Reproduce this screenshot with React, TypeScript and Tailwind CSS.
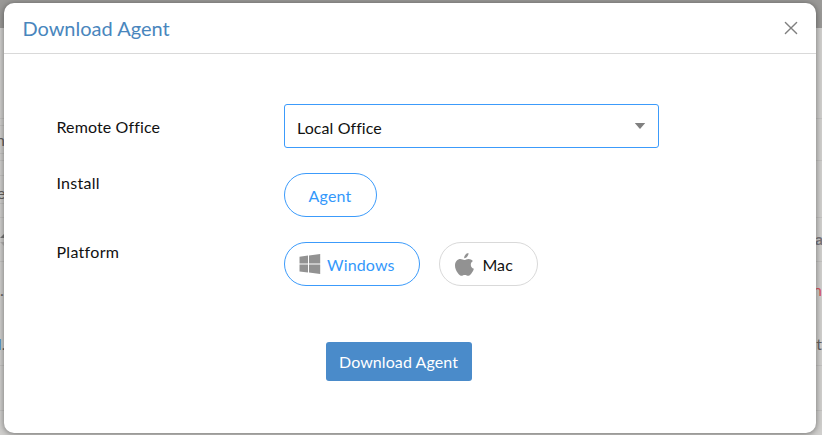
import type { ReactNode } from 'react';

function Backdrop() {
  return (
    <div className="flex h-[435px] w-full flex-col bg-[#d0cfcd] text-[16px] leading-[20px] text-[#65625f]">
      <div className="h-7 shrink-0 bg-[#9a9997]" />
      <div className="h-[91px] shrink-0 border-b border-[#c3c2c0]" />
      <div className="flex h-[42px] shrink-0 items-center border-b border-[#c3c2c0]">
        <div className="flex h-[29px] w-2 items-center border-y border-[#c3c2c0]">
          <span className="-ml-1">n</span>
        </div>
      </div>
      <div className="flex h-[57px] shrink-0 items-center border-b border-[#c3c2c0]">
        <div className="flex h-[29px] w-2 items-center border-y border-[#c3c2c0] pt-[7px]">
          <span className="-ml-[3px]">e</span>
        </div>
      </div>
      <div className="flex h-[44px] shrink-0 items-center justify-between border-b border-[#c3c2c0]">
        <svg width="4" height="16" viewBox="0 0 4 16">
          <path d="M0 6 4 2v4z" fill="#777" />
          <path d="M0 10h4v4z" fill="#b5b4b2" />
        </svg>
        <span className="w-[7px] pb-px font-bold text-[#77767c]">a</span>
      </div>
      <div className="flex h-[104px] shrink-0 flex-col justify-between border-b border-[#c3c2c0] pt-[18px] pb-[11px]">
        <div className="flex justify-between">
          <span>.</span>
          <span className="text-[#d9535c]">n</span>
        </div>
        <div className="flex justify-between">
          <span className="-ml-[2px]"><span className="text-[#4f80bd]">l</span>.</span>
          <span>nt</span>
        </div>
      </div>
      <div className="h-[45px] shrink-0 border-b border-[#c3c2c0]" />
    </div>
  );
}

function Row({ label, className, children }: { label: ReactNode; className: string; children: ReactNode }) {
  return (
    <div className={`flex items-start ${className}`}>
      <div className="w-[228px] shrink-0 pl-[0.5px] leading-5">{label}</div>
      {children}
    </div>
  );
}

export default function App() {
  return (
    <div className="relative h-[435px] w-[822px] overflow-hidden font-['Lato',sans-serif] text-[16px] text-[#111]">
      <Backdrop />
      <div className="absolute top-[3px] left-1 flex h-[430px] w-[812px] flex-col rounded-[10px] bg-white shadow-[0_1px_6px_rgba(0,0,0,0.45)]">
        <div className="flex h-[51px] shrink-0 items-center justify-between border-b border-[#d9d9d9] pr-[18px] pl-[18.4px]">
          <h1 className="text-[20px] leading-6 text-[#4986bd]">Download Agent</h1>
          <button aria-label="Close">
            <svg width="14" height="14" viewBox="0 0 14 14" fill="none" stroke="#808080" strokeWidth="1.4" strokeLinecap="round">
              <path d="M1.4 1.4 12.6 12.6M12.6 1.4 1.4 12.6" />
            </svg>
          </button>
        </div>

        <div className="flex flex-col pt-[50px] pl-[52px]">
          <Row label={<span className="tracking-[0.12px]">Remote Office</span>} className="h-[69px] [&>div:first-child]:pt-[13px]">
            <button className="flex h-11 w-[375px] items-center justify-between rounded-[3px] border border-[#3c9bfb] pr-3 pl-3">
              <span className="pt-[3px] leading-5 tracking-[0.08px]">Local Office</span>
              <svg width="12" height="6" viewBox="0 0 12 6" fill="#808080">
                <path d="M.8 0h10.4L6.5 5.5q-.5.5-1 0z" />
              </svg>
            </button>
          </Row>
          <Row label={<span className="tracking-[0.25px]">Install</span>} className="h-[69px]">
            <button className="flex h-11 w-[93px] items-center justify-center rounded-full border border-[#3c9bfb] pt-px pr-px leading-5 tracking-[0.15px] text-[#3498fb]">
              Agent
            </button>
          </Row>
          <Row label={<span className="tracking-[0.3px]">Platform</span>} className="h-[100px]">
            <button className="mr-[19px] flex h-11 w-[136px] items-center rounded-full border border-[#3c9bfb] pl-[14px] text-[#3498fb]">
              <svg width="22" height="20" viewBox="0 0 22 20" fill="#929292">
                <path d="M.5 2.7 9 1.6v7.9H.5zM10 1.4 21.2 0v9.5H10zM.5 10.5H9v8L.5 17.4zM10 10.5h11.2V20L10 18.6z" />
              </svg>
              <span className="ml-[6px] pt-px leading-5 tracking-[0.15px]">Windows</span>
            </button>
            <button className="flex h-11 w-[99px] items-center rounded-full border border-[#d9d9d9] pl-[15px]">
              <svg width="19" height="23" viewBox="0 0 19 23" fill="#929292">
                <path d="M13.4.1c.2 1.3-.3 2.5-1.1 3.5-.8 1-2 1.7-3.1 1.6-.2-1.2.4-2.5 1.1-3.3C11.1.9 12.4.2 13.4.1zM17.9 8.1c-1.2.7-2.1 2-2.1 3.6 0 2 1.2 3.5 3.1 4.1-.4 1.4-1.2 2.9-2.2 4.3-.9 1.3-1.8 2.7-3.3 2.7-1.4 0-1.9-.8-3.600-.8-1.7 0-2.200.8-3.600.8-1.4 0-2.500-1.400-3.400-2.700C1 17.6 0 15.1 0 12.6c0-4.1 2.6-6.500 5.400-6.500 1.5 0 2.900 1 3.900 1 .9 0 2.500-1.100 4.300-1.100 1.700 0 3.300.7 4.300 2.100z" />
              </svg>
              <span className="ml-[8.4px] pt-px leading-5 tracking-[0.1px]">Mac</span>
            </button>
          </Row>
          <button className="ml-[270px] flex h-[39px] w-[146px] items-center justify-center rounded-[3px] bg-[#4a8bca] pt-px pr-px leading-5 tracking-[0.08px] text-white">
            Download Agent
          </button>
        </div>
      </div>
    </div>
  );
}
